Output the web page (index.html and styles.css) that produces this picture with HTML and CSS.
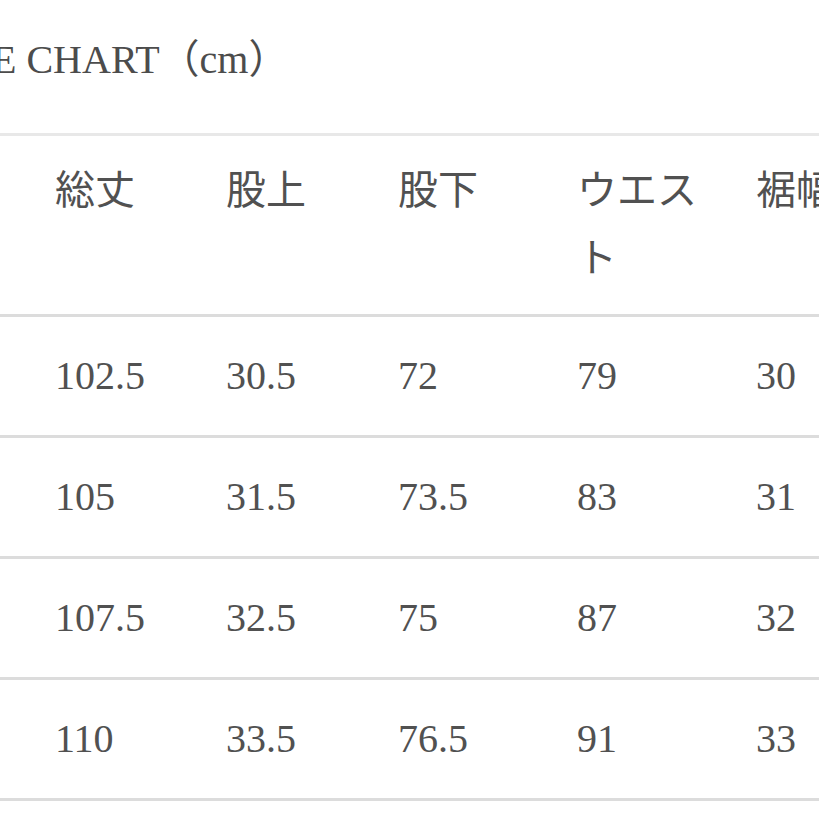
FILE: index.html
```html
<!DOCTYPE html>
<html lang="ja">
<head>
<meta charset="utf-8">
<title>SIZE CHART</title>
<link rel="stylesheet" href="styles.css">
</head>
<body>
<main class="page">
  <h1 class="title">SIZE CHART（cm）</h1>
  <div class="chart">
    <div class="row head">
      <div class="cell">総丈</div>
      <div class="cell">股上</div>
      <div class="cell">股下</div>
      <div class="cell">ウエスト</div>
      <div class="cell">裾幅</div>
    </div>
    <div class="row">
      <div class="cell">102.5</div>
      <div class="cell">30.5</div>
      <div class="cell">72</div>
      <div class="cell">79</div>
      <div class="cell">30</div>
    </div>
    <div class="row">
      <div class="cell">105</div>
      <div class="cell">31.5</div>
      <div class="cell">73.5</div>
      <div class="cell">83</div>
      <div class="cell">31</div>
    </div>
    <div class="row">
      <div class="cell">107.5</div>
      <div class="cell">32.5</div>
      <div class="cell">75</div>
      <div class="cell">87</div>
      <div class="cell">32</div>
    </div>
    <div class="row">
      <div class="cell">110</div>
      <div class="cell">33.5</div>
      <div class="cell">76.5</div>
      <div class="cell">91</div>
      <div class="cell">33</div>
    </div>
  </div>
</main>
</body>
</html>
```
FILE: styles.css
```css
html, body {
  margin: 0;
  padding: 0;
  background: #ffffff;
  overflow: hidden;
}

body {
  font-family: "Liberation Serif", "Noto Sans CJK JP", serif;
  font-size: 40px;
  color: #515151;
}

.page {
  width: 819px;
  height: 819px;
}

.title {
  margin: 0 0 39px -68px;
  padding-top: 26px;
  font-size: 40px;
  font-weight: normal;
  line-height: 68px;
  white-space: nowrap;
  color: #4c4c4c;
}

.chart {
  display: flex;
  flex-direction: column;
  border-top: 3px solid #e8e8e8;
}

.row {
  display: grid;
  grid-template-columns: 171px 172px 179px 179px 179px;
  padding: 25px 0 25px 55px;
  border-bottom: 3px solid #dcdcdc;
  line-height: 68px;
}

.row.head {
  padding: 21px 0 21px 55px;
}

.cell {
  padding-right: 30px;
  white-space: normal;
}
```
